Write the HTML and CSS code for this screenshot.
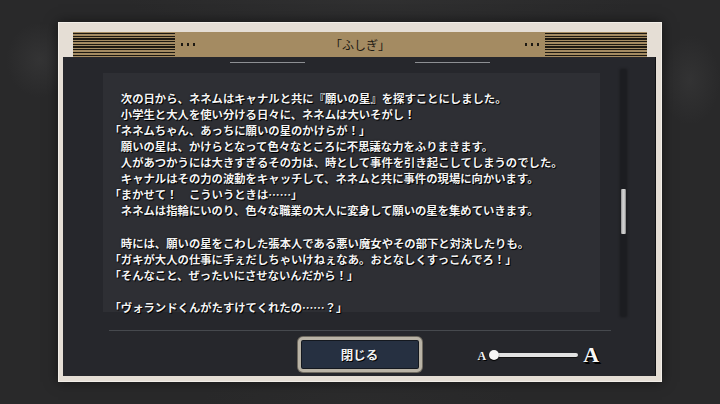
FILE: index.html
```html
<!DOCTYPE html>
<html lang="ja">
<head>
<meta charset="utf-8">
<title>ふしぎ</title>
<link rel="stylesheet" href="styles.css">
</head>
<body>
<div class="stage">
  <div class="frame">
    <div class="header">
      <div class="stripes"></div>
      <div class="dots"><i></i><i></i><i></i></div>
      <div class="title">「ふしぎ」</div>
      <div class="dots"><i></i><i></i><i></i></div>
      <div class="stripes"></div>
    </div>
    <div class="panel">
      <div class="deco"><span></span><span></span></div>
      <div class="content">
        <div class="textbox">
          <p>　次の日から、ネネムはキャナルと共に『願いの星』を探すことにしました。</p>
          <p>　小学生と大人を使い分ける日々に、ネネムは大いそがし！</p>
          <p>「ネネムちゃん、あっちに願いの星のかけらが！」</p>
          <p>　願いの星は、かけらとなって色々なところに不思議な力をふりまきます。</p>
          <p>　人があつかうには大きすぎるその力は、時として事件を引き起こしてしまうのでした。</p>
          <p>　キャナルはその力の波動をキャッチして、ネネムと共に事件の現場に向かいます。</p>
          <p>「まかせて！　こういうときは……」</p>
          <p>　ネネムは指輪にいのり、色々な職業の大人に変身して願いの星を集めていきます。</p>
          <p>&nbsp;</p>
          <p>　時には、願いの星をこわした張本人である悪い魔女やその部下と対決したりも。</p>
          <p>「ガキが大人の仕事に手ぇだしちゃいけねぇなあ。おとなしくすっこんでろ！」</p>
          <p>「そんなこと、ぜったいにさせないんだから！」</p>
          <p>&nbsp;</p>
          <p>「ヴォランドくんがたすけてくれたの……？」</p>
        </div>
        <div class="scrollbar"><div class="thumb"></div></div>
      </div>
      <div class="separator"></div>
      <div class="footer">
        <div></div>
        <button class="close">閉じる</button>
        <div class="slider">
          <span class="a-small">A</span>
          <div class="track"><span class="knob"></span></div>
          <span class="a-big">A</span>
        </div>
      </div>
    </div>
  </div>
</div>
</body>
</html>
```

FILE: styles.css
```css
html, body {
  margin: 0;
  padding: 0;
}
body {
  width: 720px;
  height: 404px;
  overflow: hidden;
  background:
    radial-gradient(ellipse 45px 50px at 40px 60px, rgba(90,90,90,0.22), rgba(0,0,0,0) 75%),
    radial-gradient(ellipse 40px 60px at 690px 80px, rgba(90,90,90,0.2), rgba(0,0,0,0) 75%),
    radial-gradient(ellipse 320px 40px at 380px 0px, rgba(60,60,60,0.35), rgba(0,0,0,0) 80%),
    radial-gradient(ellipse 200px 60px at 360px 404px, rgba(50,50,50,0.3), rgba(0,0,0,0) 80%),
    #29292a;
  font-family: "Noto Sans CJK JP", sans-serif;
}
.stage {
  padding: 22px 0 0 58px;
}
.frame {
  width: 604px;
  height: 360px;
  box-sizing: border-box;
  padding: 10px 6px 6px 5px;
  background: #e5ded5;
  box-shadow: 0 0 12px rgba(0,0,0,0.5), inset 0 0 0 1px #f2eee8;
  display: flex;
  flex-direction: column;
}
.header {
  height: 25px;
  margin: 0 9px 0 10px;
  background: #a48b62;
  display: flex;
  align-items: center;
  box-shadow: 0 1px 0 #3a3226;
}
.stripes {
  width: 102px;
  height: 23px;
  margin-top: 1px;
  align-self: flex-start;
  background: repeating-linear-gradient(to bottom, #1d1912 0 1.2px, #a48b62 1.2px 2.7px);
}
.dots {
  display: flex;
  gap: 3.5px;
  margin: 0 6px;
}
.dots i {
  width: 2.3px;
  height: 2.3px;
  background: #1d1912;
}
.title {
  flex: 1;
  text-align: center;
  font-size: 12px;
  color: #1d1912;
  line-height: 25px;
}
.panel {
  flex: 1;
  background: #26272c;
  box-shadow: inset -1px 0 0 #101114;
  display: flex;
  flex-direction: column;
}
.deco {
  display: flex;
  justify-content: center;
  gap: 110px;
  margin-top: 5px;
}
.deco span {
  width: 75px;
  height: 1px;
  background: #8d8f93;
}
.content {
  margin-top: 10px;
  height: 239px;
  padding-left: 40px;
  display: flex;
  align-items: flex-start;
}
.textbox {
  width: 497px;
  height: 239px;
  box-sizing: border-box;
  padding: 16.5px 0 0 6.5px;
  background: #2e2f34;
}
.textbox p {
  margin: 0;
  font-size: 11.35px;
  line-height: 16.15px;
  height: 16.15px;
  white-space: nowrap;
  font-weight: 700;
  color: #f4f4f4;
  text-shadow: 1px 1px 0 #000, 0 0 2px rgba(0,0,0,0.8);
}
.scrollbar {
  width: 5px;
  height: 246px;
  margin: -3px 0 0 21px;
  background: #1c1d21;
  box-shadow: 0 0 3px 1px rgba(0,0,0,0.35);
  position: relative;
}
.thumb {
  position: absolute;
  left: 0;
  top: 119px;
  width: 5px;
  height: 45px;
  background: linear-gradient(to right, #8e8e8e, #d6d6d6 40%, #c4c4c4 70%, #7c7c7c);
  border-radius: 1px;
}
.separator {
  margin: 18px 0 0 46px;
  width: 502px;
  height: 1px;
  background: #46494e;
}
.footer {
  margin-top: 6px;
  display: grid;
  grid-template-columns: 1fr auto 1fr;
  align-items: center;
}
.close {
  width: 124px;
  height: 35px;
  box-sizing: border-box;
  border: 3px solid #b9b3a6;
  border-radius: 5px;
  background: #263041;
  box-shadow: inset 0 0 0 1px #14181f, 0 0 0 1px #6f6a60;
  color: #f2f2f2;
  font-family: "Noto Sans CJK JP", sans-serif;
  font-size: 12.5px;
  font-weight: 700;
  text-shadow: 1px 1px 0 #000;
  padding: 0;
}
.slider {
  display: flex;
  align-items: center;
  padding-left: 56px;
  margin-top: 1px;
}
.a-small {
  font-family: "Liberation Serif", serif;
  font-weight: bold;
  font-size: 12px;
  color: #f4f4f4;
  text-shadow: 1px 1px 0 #000;
  line-height: 12px;
  margin-top: 1px;
}
.track {
  position: relative;
  width: 84px;
  height: 4px;
  margin-left: 8px;
  background: #e2e2e2;
  border-radius: 2px;
  box-shadow: 0 1px 0 #111;
}
.knob {
  position: absolute;
  left: -5px;
  top: -3px;
  width: 10px;
  height: 10px;
  border-radius: 50%;
  background: #f6f6f6;
  box-shadow: 0 1px 1px #000;
}
.a-big {
  font-family: "Liberation Serif", serif;
  font-weight: bold;
  font-size: 22px;
  line-height: 22px;
  color: #f8f8f8;
  text-shadow: 1px 1px 0 #000, 2px 2px 0 #000;
  margin-left: 5px;
}
```
